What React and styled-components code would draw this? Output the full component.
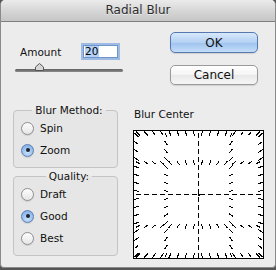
import React from 'react';
import styled, { createGlobalStyle } from 'styled-components';

const GlobalStyle = createGlobalStyle`
  html, body {
    margin: 0;
    padding: 0;
    background: #555555;
  }
  body {
    font-family: "DejaVu Sans", "Liberation Sans", sans-serif;
  }
`;

const Window = styled.div`
  width: 276px;
  height: 268px;
  box-sizing: border-box;
  background: #ececec;
  border: 1px solid #8a8a8a;
  border-top: none;
  border-radius: 5px 5px 4px 4px;
  overflow: hidden;
  display: flex;
  flex-direction: column;
`;

const TitleBar = styled.div`
  height: 22px;
  box-sizing: border-box;
  background: linear-gradient(#ebebeb, #d3d3d3 60%, #c6c6c6);
  border-bottom: 1px solid #7e7e7e;
  display: flex;
  align-items: center;
  justify-content: center;
  font-size: 12px;
  color: #2b2b2b;
  text-shadow: 0 1px 0 rgba(255, 255, 255, 0.6);
  padding-bottom: 1px;
`;

const Body = styled.div`
  padding: 10px 11px 0 12px;
  display: flex;
  flex-direction: column;
`;

const TopRow = styled.div`
  display: flex;
  justify-content: space-between;
`;

const AmountBlock = styled.div`
  padding-top: 13px;
  display: flex;
  flex-direction: column;
`;

const AmountRow = styled.div`
  display: flex;
  align-items: center;
  height: 13px;
  padding-left: 7px;
`;

const Label = styled.div`
  font-size: 10.5px;
  color: #111;
  width: ${(p) => p.width || 'auto'};
`;

const NumberField = styled.div`
  width: 35px;
  height: 13px;
  box-sizing: border-box;
  background: #fff;
  border: 1px solid #6f94cb;
  box-shadow: 0 0 0 2px rgba(125, 167, 224, 0.7);
  display: flex;
  align-items: center;
  padding-left: 1px;
  font-size: 10.5px;
  color: #000;
`;

const Selection = styled.span`
  background: #b4d2f6;
  line-height: 11px;
  padding-right: 1px;
`;

const Slider = styled.div`
  position: relative;
  margin: 5px 0 0 2px;
  width: 108px;
  height: 10px;
`;

const Track = styled.div`
  position: absolute;
  left: 0;
  right: 0;
  bottom: 1px;
  height: 3px;
  border-radius: 2px;
  background: linear-gradient(#5e5e5e, #8c8c8c);
`;

const Thumb = styled.svg`
  position: absolute;
  left: 20px;
  top: 0;
`;

const ButtonColumn = styled.div`
  display: flex;
  flex-direction: column;
  gap: 12px;
  margin-right: 6px;
`;

const Button = styled.div`
  width: 88px;
  height: ${(p) => (p.primary ? '21px' : '20px')};
  box-sizing: border-box;
  border-radius: 5px;
  border: 1px solid ${(p) => (p.primary ? '#5679b0' : '#9a9a9a')};
  background: ${(p) =>
    p.primary
      ? 'linear-gradient(#d8e8fb, #b3d0f3 50%, #9fc3ee 51%, #c4dcf8)'
      : 'linear-gradient(#ffffff, #f4f4f4 50%, #e8e8e8 51%, #f6f6f6)'};
  box-shadow: 0 1px 1px rgba(0, 0, 0, 0.12);
  display: flex;
  align-items: center;
  justify-content: center;
  font-size: 12px;
  color: #111;
`;

const BottomRow = styled.div`
  display: flex;
  margin-top: 19px;
  gap: 15px;
`;

const GroupColumn = styled.div`
  display: flex;
  flex-direction: column;
  gap: 2px;
  width: 105px;
`;

const Group = styled.fieldset`
  margin: 0;
  padding: 1px 0 6px 7px;
  border: 1px solid #c4c4c4;
  border-radius: 4px;
  background: rgba(0, 0, 0, 0.025);
  min-width: 0;
`;

const Legend = styled.legend`
  margin: 0 auto;
  padding: 0 3px;
  font-size: 10.5px;
  line-height: 12px;
  color: #111;
`;

const RadioRow = styled.div`
  display: flex;
  align-items: center;
  height: 22px;
  gap: 6px;
  font-size: 10.5px;
  color: #111;
`;

const RadioDot = styled.div`
  width: 13px;
  height: 13px;
  box-sizing: border-box;
  border-radius: 50%;
  border: 1px solid ${(p) => (p.checked ? '#5b7fb5' : '#8e8e8e')};
  background: ${(p) =>
    p.checked
      ? 'radial-gradient(circle at 50% 70%, #c9e0fa, #8db7ea 70%, #7aa7e0)'
      : 'linear-gradient(#fdfdfd, #e6e6e6)'};
  box-shadow: 0 1px 1px rgba(0, 0, 0, 0.1);
  display: flex;
  align-items: center;
  justify-content: center;
  &::after {
    content: '';
    display: ${(p) => (p.checked ? 'block' : 'none')};
    width: 4px;
    height: 4px;
    border-radius: 50%;
    background: #1c2430;
  }
`;

const CenterColumn = styled.div`
  display: flex;
  flex-direction: column;
  padding-top: 3px;
`;

const CenterLabel = styled.div`
  font-size: 10.5px;
  line-height: 14px;
  color: #111;
  padding-left: 1px;
  margin-bottom: 9px;
`;

const CenterBox = styled.div`
  width: 131px;
  height: 129px;
  box-sizing: border-box;
  border: 1px solid #000;
  background: #fff;
  display: flex;
`;

const W = 129;
const H = 127;
const CX = 64.5;
const CY = 63.5;

const buildDashes = () => {
  const xs = [2.5, 32, CX, 97, W - 2.5];
  const ys = [2.5, 31.75, CY, 95.25, H - 2.5];
  const pts = [];
  xs.forEach((x) => {
    for (let y = 4; y <= H - 3; y += 8) pts.push([x, y]);
  });
  ys.forEach((y) => {
    for (let x = 4; x <= W - 3; x += 8) pts.push([x, y]);
  });
  return pts.map(([x, y]) => {
    let dx = CX - x;
    let dy = CY - y;
    const d = Math.hypot(dx, dy) || 1;
    dx = (dx / d) * 2.5;
    dy = (dy / d) * 2.5;
    return [x - dx, y - dy, x + dx, y + dy];
  });
};

const BlurPreview = () => (
  <svg width={W} height={H} viewBox={`0 0 ${W} ${H}`} shapeRendering="crispEdges">
    {buildDashes().map(([x1, y1, x2, y2], i) => (
      <line key={i} x1={x1} y1={y1} x2={x2} y2={y2} stroke="#000" strokeWidth="1" />
    ))}
    <rect x={CX - 0.5} y={CY - 0.5} width="1.5" height="1.5" fill="#000" />
  </svg>
);

const Radio = ({ checked, children }) => (
  <RadioRow>
    <RadioDot checked={checked} />
    {children}
  </RadioRow>
);

export default function App() {
  return (
    <>
      <GlobalStyle />
      <Window>
        <TitleBar>Radial Blur</TitleBar>
        <Body>
          <TopRow>
            <AmountBlock>
              <AmountRow>
                <Label width="63px">Amount</Label>
                <NumberField>
                  <Selection>20</Selection>
                </NumberField>
              </AmountRow>
              <Slider>
                <Track />
                <Thumb width="9" height="8" viewBox="0 0 9 8">
                  <path d="M4.5 0.5 L8.5 4 L8.5 7.5 L0.5 7.5 L0.5 4 Z" fill="#d6d6d6" stroke="#555" strokeWidth="1" />
                </Thumb>
              </Slider>
            </AmountBlock>
            <ButtonColumn>
              <Button primary>OK</Button>
              <Button>Cancel</Button>
            </ButtonColumn>
          </TopRow>
          <BottomRow>
            <GroupColumn>
              <Group>
                <Legend>Blur Method:</Legend>
                <Radio>Spin</Radio>
                <Radio checked>Zoom</Radio>
              </Group>
              <Group>
                <Legend>Quality:</Legend>
                <Radio>Draft</Radio>
                <Radio checked>Good</Radio>
                <Radio>Best</Radio>
              </Group>
            </GroupColumn>
            <CenterColumn>
              <CenterLabel>Blur Center</CenterLabel>
              <CenterBox>
                <BlurPreview />
              </CenterBox>
            </CenterColumn>
          </BottomRow>
        </Body>
      </Window>
    </>
  );
}
